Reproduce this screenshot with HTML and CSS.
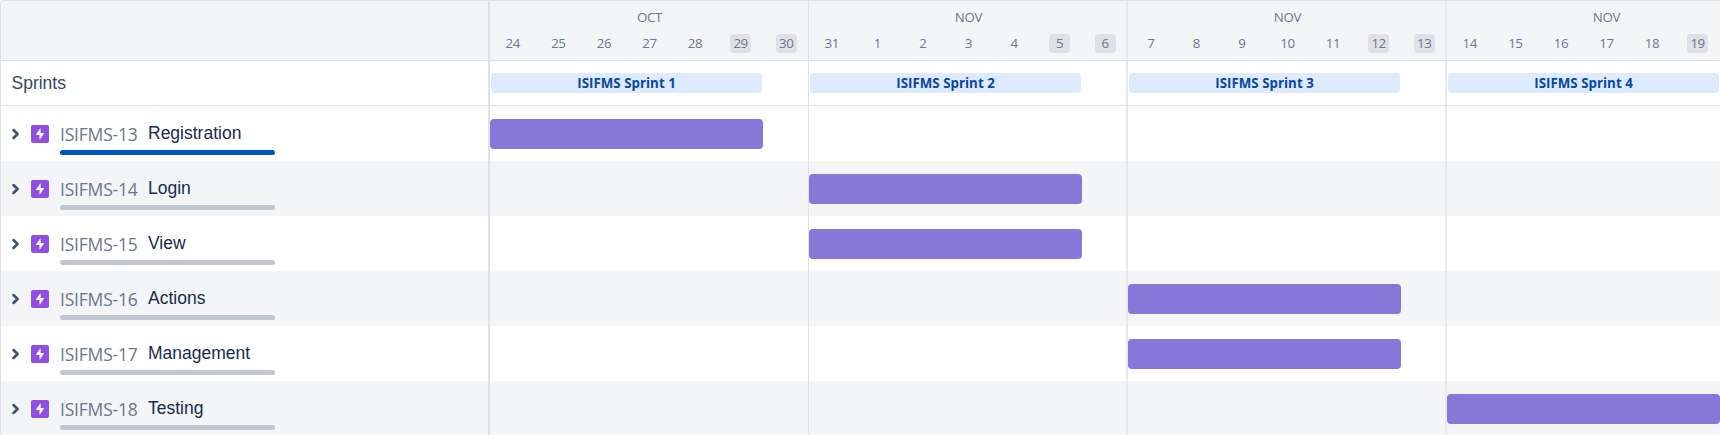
FILE: index.html
```
<!DOCTYPE html>
<html lang="en">
<head>
<meta charset="utf-8">
<title>Roadmap</title>
<link rel="stylesheet" href="styles.css">
</head>
<body>
<svg class="defs" aria-hidden="true">
<symbol id="chevron" viewBox="0 0 10 12"><path d="M2.5 2.100 6.600 6 2.500 9.900" fill="none" stroke="#42526e" stroke-width="2.700" stroke-linecap="round" stroke-linejoin="round"/></symbol>
<symbol id="epic" viewBox="0 0 18 18"><rect width="18" height="18" rx="2" fill="#904ee2"/><path d="M9.6 3.9v4.2h2.8c.5 0 .6.4.4.7L9.1 14.3c-.2.3-.6.2-.6-.2V9.9H5.6c-.5 0-.6-.4-.4-.7L9 3.7c.2-.3.6-.2.6.2z" fill="#fff"/></symbol>
</svg>
<main class="roadmap">
  <header class="line head">
    <div class="side"></div>
    <div class="week first"><div class="month">OCT</div><div class="days"><span>24</span><span>25</span><span>26</span><span>27</span><span>28</span><span class="off">29</span><span class="off">30</span></div></div>
    <div class="week"><div class="month">NOV</div><div class="days"><span>31</span><span>1</span><span>2</span><span>3</span><span>4</span><span class="off">5</span><span class="off">6</span></div></div>
    <div class="week"><div class="month">NOV</div><div class="days"><span>7</span><span>8</span><span>9</span><span>10</span><span>11</span><span class="off">12</span><span class="off">13</span></div></div>
    <div class="week"><div class="month">NOV</div><div class="days"><span>14</span><span>15</span><span>16</span><span>17</span><span>18</span><span class="off">19</span></div></div>
  </header>
  <section class="line sprints">
    <div class="side">Sprints</div>
    <div class="week first"><div class="sprint">ISIFMS Sprint 1</div></div>
    <div class="week"><div class="sprint">ISIFMS Sprint 2</div></div>
    <div class="week"><div class="sprint">ISIFMS Sprint 3</div></div>
    <div class="week"><div class="sprint">ISIFMS Sprint 4</div></div>
  </section>
  <section class="line epic">
    <div class="side"><svg class="chevron"><use href="#chevron"/></svg><svg class="icon"><use href="#epic"/></svg><div class="info"><div class="label"><span class="key">ISIFMS-13</span><span class="name">Registration</span></div><div class="progress done"></div></div></div>
    <div class="week first"><div class="bar"></div></div><div class="week"></div><div class="week"></div><div class="week"></div>
  </section>
  <section class="line epic alt">
    <div class="side"><svg class="chevron"><use href="#chevron"/></svg><svg class="icon"><use href="#epic"/></svg><div class="info"><div class="label"><span class="key">ISIFMS-14</span><span class="name">Login</span></div><div class="progress"></div></div></div>
    <div class="week first"></div><div class="week"><div class="bar"></div></div><div class="week"></div><div class="week"></div>
  </section>
  <section class="line epic">
    <div class="side"><svg class="chevron"><use href="#chevron"/></svg><svg class="icon"><use href="#epic"/></svg><div class="info"><div class="label"><span class="key">ISIFMS-15</span><span class="name">View</span></div><div class="progress"></div></div></div>
    <div class="week first"></div><div class="week"><div class="bar"></div></div><div class="week"></div><div class="week"></div>
  </section>
  <section class="line epic alt">
    <div class="side"><svg class="chevron"><use href="#chevron"/></svg><svg class="icon"><use href="#epic"/></svg><div class="info"><div class="label"><span class="key">ISIFMS-16</span><span class="name">Actions</span></div><div class="progress"></div></div></div>
    <div class="week first"></div><div class="week"></div><div class="week"><div class="bar"></div></div><div class="week"></div>
  </section>
  <section class="line epic">
    <div class="side"><svg class="chevron"><use href="#chevron"/></svg><svg class="icon"><use href="#epic"/></svg><div class="info"><div class="label"><span class="key">ISIFMS-17</span><span class="name">Management</span></div><div class="progress"></div></div></div>
    <div class="week first"></div><div class="week"></div><div class="week"><div class="bar"></div></div><div class="week"></div>
  </section>
  <section class="line epic alt">
    <div class="side"><svg class="chevron"><use href="#chevron"/></svg><svg class="icon"><use href="#epic"/></svg><div class="info"><div class="label"><span class="key">ISIFMS-18</span><span class="name">Testing</span></div><div class="progress"></div></div></div>
    <div class="week first"></div><div class="week"></div><div class="week"></div><div class="week"><div class="bar"></div></div>
  </section>
</main>
</body>
</html>
```
FILE: styles.css
```
* { box-sizing: border-box; }
body { margin: 0; overflow: hidden; background: #fff; }
.defs { display: none; }
.roadmap {
  width: 1720px;
  height: 435px;
  overflow: hidden;
  border-left: 1px solid #dfe1e6;
  border-top: 1px solid #dfe1e6;
  border-top-left-radius: 4px;
  font-family: "Open Sans", sans-serif;
  color: #172b4d;
}
.line { display: grid; grid-template-columns: 489px repeat(4, 319px); width: 1765px; }
.side { border-right: 2px solid #dfe1e6; display: flex; }
.week { border-right: 2px solid #e6e8ec; }
.first { border-right: 1px solid #dfe1e6; }
.head { height: 60px; background: #f4f5f7; border-bottom: 1px solid #dfe1e6; font-size: 13.3px; color: #6b778c; }
.month { width: 319px; height: 18px; margin-top: 7px; line-height: 18px; text-align: center; letter-spacing: -0.3px; }
.days { display: grid; grid-template-columns: repeat(7, 45.57px); margin-top: 8px; }
.days span { width: 21px; height: 19px; line-height: 18px; border-radius: 4px; text-align: center; justify-self: center; letter-spacing: -0.4px; }
.days .off { background: #dfe1e6; }
.sprints { height: 45px; border-bottom: 1px solid #dfe1e6; }
.sprints .side { align-items: center; padding-left: 10.5px; font: 17.5px "Liberation Sans", sans-serif; color: #344563; }
.sprint { width: 271px; height: 20px; margin: 12px 0 0 1px; border-radius: 4px; background: #deebff; color: #0747a6; font-size: 13.3px; font-weight: 700; line-height: 20px; text-align: center; letter-spacing: 0.03px; }
.epic { height: 55px; }
.alt { background: #f4f5f7; }
.chevron { width: 10px; height: 12px; margin: 22px 0 0 10px; }
.icon { width: 18px; height: 18px; margin: 19px 0 0 10px; }
.info { margin-left: 11px; }
.label { display: flex; width: 215px; height: 39px; padding-top: 15px; white-space: nowrap; }
.key { width: 88px; line-height: 26px; font-size: 17.5px; font-weight: 400; letter-spacing: -0.2px; color: #6b778c; }
.name { line-height: 24px; font-family: "Liberation Sans", sans-serif; font-size: 17.5px; }
.progress { width: 215px; height: 5px; margin-top: 5px; border-radius: 3px; background: #c1c7d0; }
.done { background: #0052cc; }
.bar { width: 273px; height: 29.5px; margin-top: 13px; border-radius: 4px; background: #8777d9; }
```
